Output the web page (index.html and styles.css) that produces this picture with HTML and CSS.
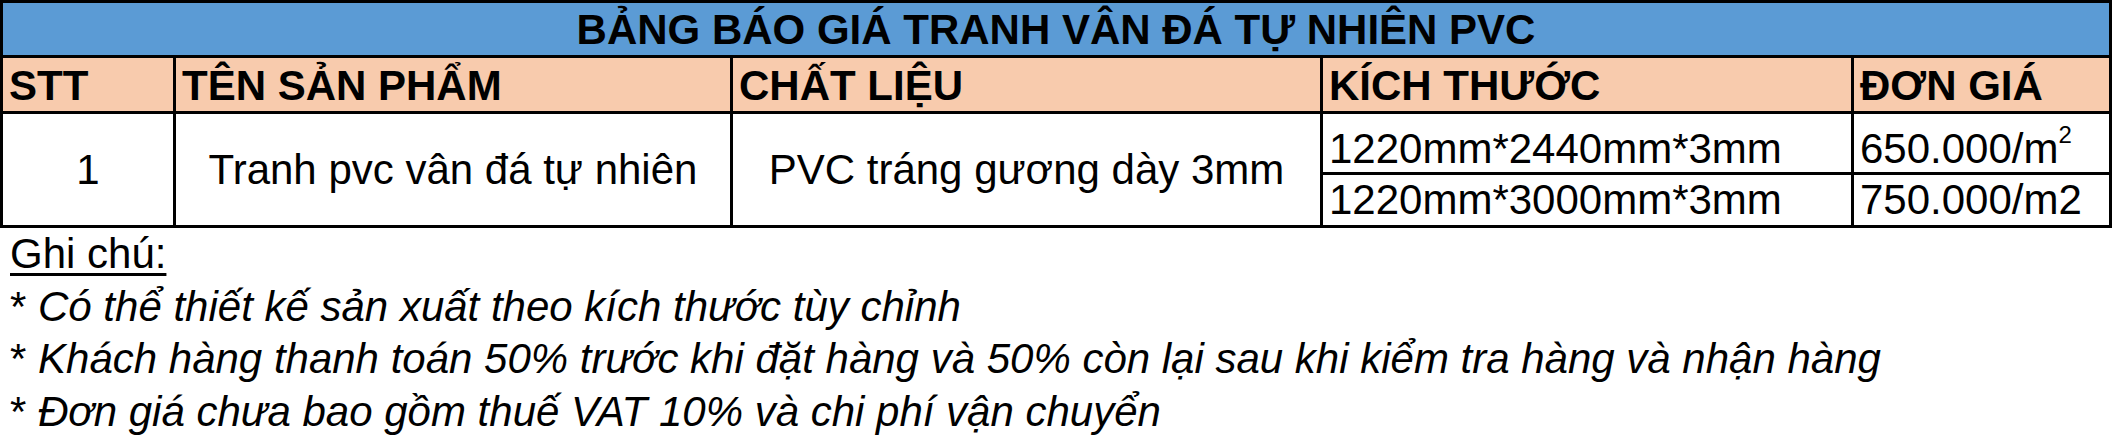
FILE: index.html
```html
<!DOCTYPE html>
<html lang="vi">
<head>
<meta charset="utf-8">
<title>Bảng báo giá tranh vân đá tự nhiên PVC</title>
<link rel="stylesheet" href="styles.css">
</head>
<body>
<div class="sheet">
  <div class="grid">
    <div class="cell title">BẢNG BÁO GIÁ TRANH VÂN ĐÁ TỰ NHIÊN PVC</div>
    <div class="cell head">STT</div>
    <div class="cell head">TÊN SẢN PHẨM</div>
    <div class="cell head">CHẤT LIỆU</div>
    <div class="cell head">KÍCH THƯỚC</div>
    <div class="cell head">ĐƠN GIÁ</div>
    <div class="cell data center span2">1</div>
    <div class="cell data center span2">Tranh pvc vân đá tự nhiên</div>
    <div class="cell data center span2">PVC tráng gương dày 3mm</div>
    <div class="cell data left first">1220mm*2440mm*3mm</div>
    <div class="cell data left first"><span>650.000/m<sup class="sup">2</sup></span></div>
    <div class="cell data left">1220mm*3000mm*3mm</div>
    <div class="cell data left">750.000/m2</div>
  </div>
  <div class="notes">
    <div class="note-title">Ghi chú:</div>
    <div class="note">* <i>Có thể thiết kế sản xuất theo kích thước tùy chỉnh</i></div>
    <div class="note">* <i>Khách hàng thanh toán 50% trước khi đặt hàng và 50% còn lại sau khi kiểm tra hàng và nhận hàng</i></div>
    <div class="note">* <i>Đơn giá chưa bao gồm thuế VAT 10% và chi phí vận chuyển</i></div>
  </div>
</div>
</body>
</html>
```

FILE: styles.css
```css
html, body {
  margin: 0;
  padding: 0;
  background: #ffffff;
}
body {
  font-family: "Liberation Sans", Arial, sans-serif;
  color: #000;
}
.sheet {
  width: 2113px;
}
.grid {
  display: grid;
  width: 2112px;
  box-sizing: border-box;
  grid-template-columns: 170px 554px 587px 528px 255px;
  grid-template-rows: 52px 53px 58px 50px;
  gap: 3px;
  padding: 3px;
  background: #000;
}
.cell {
  display: flex;
  align-items: center;
  overflow: hidden;
  white-space: nowrap;
}
.title {
  grid-column: 1 / -1;
  background: #5b9bd5;
  justify-content: center;
  font-weight: bold;
  font-size: 42px;
  padding-top: 1px;
}
.head {
  background: #f8cbad;
  font-weight: bold;
  font-size: 42px;
  padding-left: 6px;
  padding-top: 2px;
}
.data {
  background: #fff;
  font-size: 42px;
}
.span2 {
  grid-row: span 2;
}
.center {
  justify-content: center;
}
.left {
  padding-left: 6px;
}
.first {
  padding-top: 12px;
}
.sup {
  font-size: 24px;
  line-height: 0;
  vertical-align: 20px;
}
.notes {
  padding-left: 10px;
  font-size: 42px;
  line-height: 52.5px;
}
.note-title {
  text-decoration: underline;
  text-underline-offset: 5px;
  text-decoration-thickness: 3px;
}
.note i {
  font-style: italic;
}
```
